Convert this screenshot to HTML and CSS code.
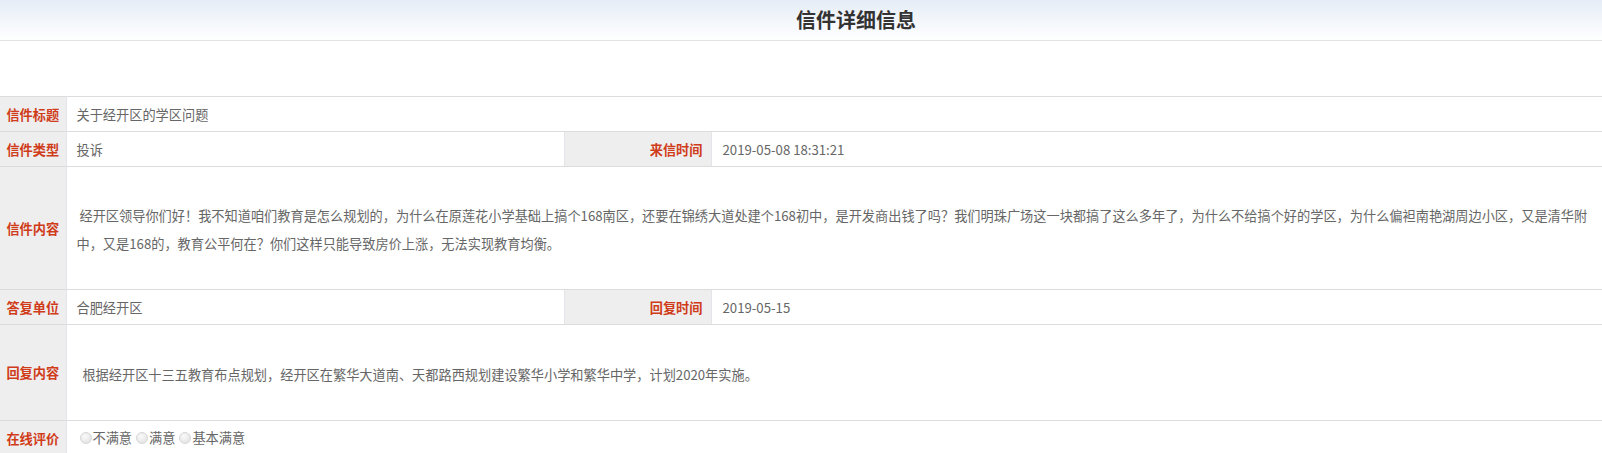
FILE: index.html
```html
<!DOCTYPE html>
<html lang="zh-CN">
<head>
<meta charset="utf-8">
<title>信件详细信息</title>
<link rel="stylesheet" href="styles.css">
</head>
<body>
<div class="page-head">
  <h1 class="page-title">信件详细信息</h1>
</div>
<table class="detail">
  <colgroup>
    <col class="c-label">
    <col class="c-val">
    <col class="c-label2">
    <col class="c-val2">
  </colgroup>
  <tr class="row-s">
    <th class="lbl">信件标题</th>
    <td class="val" colspan="3">关于经开区的学区问题</td>
  </tr>
  <tr class="row-s">
    <th class="lbl">信件类型</th>
    <td class="val">投诉</td>
    <th class="lbl lbl-r">来信时间</th>
    <td class="val val-date">2019-05-08 18:31:21</td>
  </tr>
  <tr class="row-content">
    <th class="lbl">信件内容</th>
    <td class="val val-text" colspan="3">&nbsp;经开区领导你们好！我不知道咱们教育是怎么规划的，为什么在原莲花小学基础上搞个168南区，还要在锦绣大道处建个168初中，是开发商出钱了吗？我们明珠广场这一块都搞了这么多年了，为什么不给搞个好的学区，为什么偏袒南艳湖周边小区，又是清华附中，又是168的，教育公平何在？你们这样只能导致房价上涨，无法实现教育均衡。</td>
  </tr>
  <tr class="row-s">
    <th class="lbl">答复单位</th>
    <td class="val">合肥经开区</td>
    <th class="lbl lbl-r">回复时间</th>
    <td class="val val-date">2019-05-15</td>
  </tr>
  <tr class="row-reply">
    <th class="lbl">回复内容</th>
    <td class="val val-text" colspan="3">&nbsp;&nbsp;根据经开区十三五教育布点规划，经开区在繁华大道南、天都路西规划建设繁华小学和繁华中学，计划2020年实施。</td>
  </tr>
  <tr class="row-s">
    <th class="lbl">在线评价</th>
    <td class="val val-rate" colspan="3">
      <label class="opt"><input type="radio" name="rate" class="radio">不满意</label>
      <label class="opt"><input type="radio" name="rate" class="radio">满意</label>
      <label class="opt"><input type="radio" name="rate" class="radio">基本满意</label>
    </td>
  </tr>
</table>
</body>
</html>
```

FILE: styles.css
```css
html, body {
  margin: 0;
  padding: 0;
  background: #ffffff;
  font-family: "Noto Sans CJK SC", "Microsoft YaHei", sans-serif;
  font-size: 13.2px;
  color: #666666;
}

.page-head {
  height: 40px;
  border-bottom: 1px solid #e3e3e3;
  background: linear-gradient(to bottom, #e5ecf6 0%, #f5f8fc 60%, #ffffff 100%);
  display: flex;
  align-items: center;
  justify-content: center;
  padding-left: 110px;
}

.page-title {
  margin: 0;
  font-size: 20px;
  font-weight: bold;
  color: #333333;
  line-height: 40px;
}

.detail {
  margin-top: 55px;
  width: 100%;
  border-collapse: collapse;
  table-layout: fixed;
}

.c-label { width: 66px; }
.c-val { width: 498px; }
.c-label2 { width: 147px; }
.c-val2 { width: auto; }

.detail th,
.detail td {
  border-top: 1px solid #dcdcdc;
  border-bottom: 1px solid #dcdcdc;
  padding: 0;
  vertical-align: middle;
}

.row-s { height: 35px; }
.row-content { height: 123px; }
.row-reply { height: 96px; }

.lbl {
  background: #eeeeee;
  color: #d03c1a;
  font-weight: bold;
  font-size: 13.2px;
  text-align: center;
  border-right: 1px solid #e2e4ea;
  white-space: nowrap;
}

.lbl-r {
  text-align: right;
  padding-right: 8px !important;
  border-left: 1px solid #e2e4ea;
}

.val {
  padding-left: 10px !important;
  color: #666666;
  text-align: left;
  font-weight: normal;
}

.val-date {
  padding-left: 11px !important;
}

.val-text {
  line-height: 28px;
  padding-right: 8px !important;
  padding-top: 4px !important;
  word-break: break-all;
}

.val-rate {
  padding-left: 13px !important;
}

.opt {
  display: inline-flex;
  align-items: center;
  margin-right: 1px;
}

.radio {
  appearance: none;
  -webkit-appearance: none;
  width: 12px;
  height: 12px;
  margin: 0 1px 0 0;
  border-radius: 50%;
  border: 1px solid #d8d8d8;
  background: radial-gradient(circle at 40% 35%, #fafafa 0%, #e6e6e6 70%, #dcdcdc 100%);
  box-sizing: border-box;
}
```
